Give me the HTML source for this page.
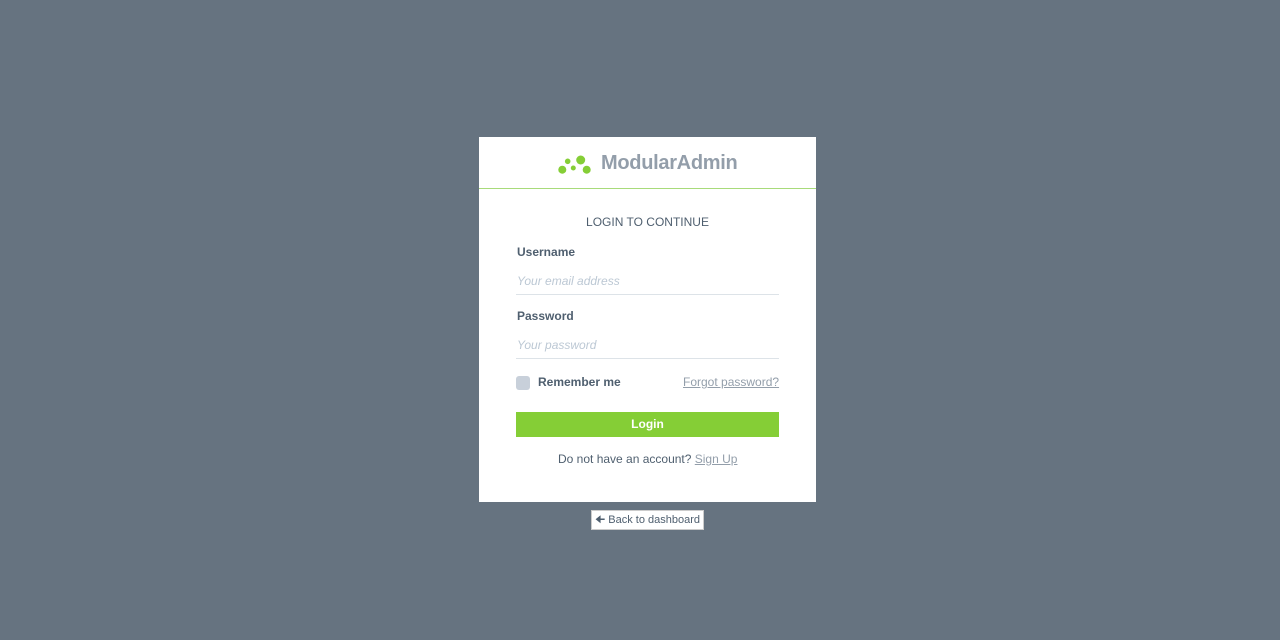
<!DOCTYPE html>
<html><head><style>
body{margin:0;width:1280px;height:640px;background:#667380;font-family:"Liberation Sans",sans-serif;position:relative;overflow:hidden}
.card{position:absolute;left:479px;top:137px;width:337px;height:365px;background:#fff}
.hline{position:absolute;left:479px;top:188px;width:337px;height:1px;background:#a8db7a}
.logo{position:absolute;left:601px;top:152px;font-size:20px;font-weight:bold;color:#939eaa;letter-spacing:-0.3px}
.t{position:absolute;font-size:12px}
.lbl{position:absolute;left:517px;font-size:12px;font-weight:bold;color:#4f5f6f}
.ph{position:absolute;left:517px;font-size:12px;font-style:italic;color:#bcc8d4}
.line{position:absolute;left:516px;width:263px;height:1px;background:#dde3e8}
</style></head><body>
<div class="card"></div>
<div class="hline"></div>
<svg style="position:absolute;left:0;top:0" width="1280" height="640">
<circle cx="562.3" cy="169.7" r="4" fill="#85ce36"/>
<circle cx="567.7" cy="161.3" r="2.8" fill="#85ce36"/>
<circle cx="573.3" cy="168" r="2.5" fill="#85ce36"/>
<circle cx="580.7" cy="160" r="4.5" fill="#85ce36"/>
<circle cx="586.7" cy="169.7" r="4" fill="#85ce36"/>
</svg>
<div class="logo">ModularAdmin</div>
<div class="t" style="left:0;width:1295px;text-align:center;top:215px;color:#4f5f6f">LOGIN TO CONTINUE</div>
<div class="lbl" style="top:245px">Username</div>
<div class="ph" style="top:274px">Your email address</div>
<div class="line" style="top:294px"></div>
<div class="lbl" style="top:309px">Password</div>
<div class="ph" style="top:338px">Your password</div>
<div class="line" style="top:358px"></div>
<div style="position:absolute;left:516px;top:376px;width:14px;height:14px;border-radius:3px;background:#c8d0da"></div>
<div class="lbl" style="left:538px;top:375px">Remember me</div>
<div class="t" style="left:683px;top:375px;color:#939eaa;text-decoration:underline">Forgot password?</div>
<div style="position:absolute;left:516px;top:412px;width:263px;height:25px;background:#85ce36;color:#fff;font-weight:bold;font-size:12px;text-align:center;line-height:25px">Login</div>
<div class="t" style="left:558px;top:452px;color:#4f5f6f">Do not have an account? <span style="color:#939eaa;text-decoration:underline">Sign Up</span></div>
<div style="position:absolute;left:591px;top:510px;width:113px;height:20px;background:#fff;border:1px solid #ccc;box-sizing:border-box;font-size:11px;color:#4f5f6f;line-height:19px;text-align:center">&#129032; Back to dashboard</div>
</body></html>
